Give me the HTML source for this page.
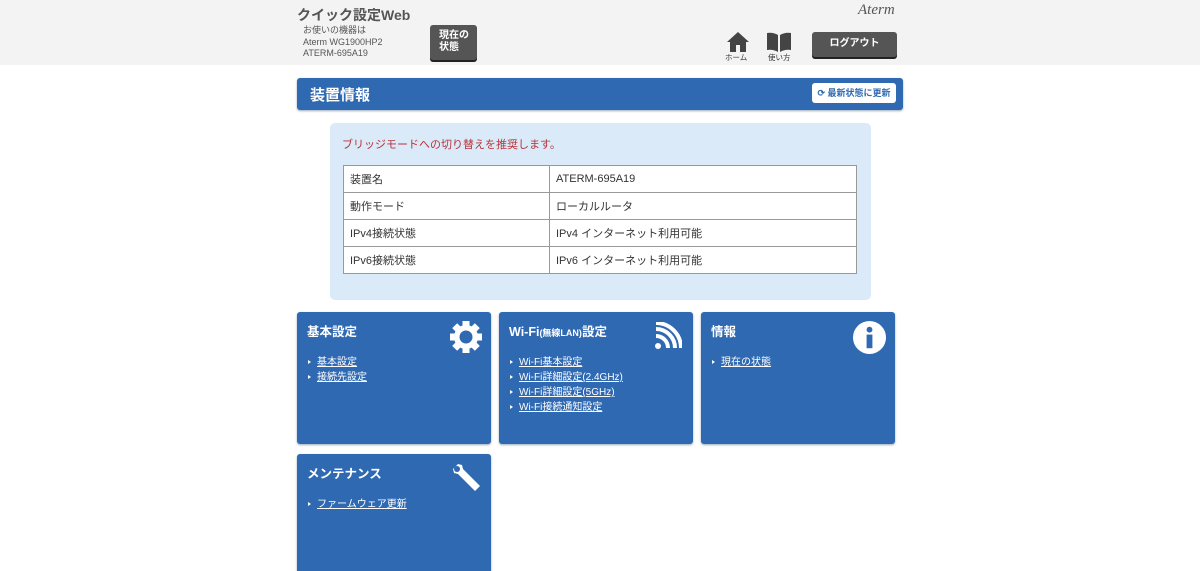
<!DOCTYPE html>
<html><head><meta charset="utf-8"><style>
*{margin:0;padding:0;box-sizing:border-box}
html,body{width:1200px;height:571px;overflow:hidden}
body{background:#fff;font-family:"Liberation Sans","Noto Sans CJK JP",sans-serif;position:relative}
.hdr{position:absolute;left:0;top:0;width:1200px;height:65px;background:#f3f3f3}
.abs{position:absolute}
.title{left:297px;top:5px;font-size:14px;font-weight:bold;color:#555}
.dev{left:303px;top:25px;font-size:9px;color:#555;line-height:11.5px}
.btn{background:#555;color:#fff;border-radius:3px;box-shadow:0 2px 0 #222;font-size:10px;font-weight:bold}
.bar{left:297px;top:78px;width:606px;height:32px;background:#2f69b2;border-radius:3px;box-shadow:0 1px 2px #9ab}
.bar h1{position:absolute;left:13px;top:6px;color:#fff;font-size:15px}
.upd{position:absolute;right:7px;top:5px;width:84px;height:20px;background:#fff;border-radius:3px;font-size:9px;color:#2f69b2;font-weight:bold;line-height:20px;text-align:center}
.info{left:330px;top:123px;width:541px;height:177px;background:#dbeaf8;border-radius:5px}
.info p{position:absolute;left:12px;top:13px;font-size:11px;color:#b8333b}
table{position:absolute;left:13px;top:42px;width:514px;border-collapse:collapse;background:#fff;font-size:11px;color:#333}
td{border:1px solid #999;height:27px;padding-left:6px}
.tile{position:absolute;width:194px;height:132px;background:#2f69b2;border-radius:3px;box-shadow:0 1px 2px #9ab;color:#fff}
.tile h2{position:absolute;left:10px;top:9px;font-size:12.5px}
.tile ul{position:absolute;left:11px;top:43px;list-style:none;font-size:10px;line-height:15px}
.tile li{padding-left:9px;position:relative}
.tile li:before{content:"";position:absolute;left:0;top:5px;border-left:3px solid #fff;border-top:2.5px solid transparent;border-bottom:2.5px solid transparent}
.tile li span{text-decoration:underline}
.tile svg{position:absolute}
</style></head><body>
<div class="hdr"></div>
<div class="abs title">クイック設定Web</div>
<div class="abs dev">お使いの機器は<br>Aterm WG1900HP2<br>ATERM-695A19</div>
<div class="abs btn" style="left:430px;top:25px;width:47px;height:35px;padding:5px 0 0 9px;line-height:12px">現在の<br>状態</div>
<div class="abs" style="left:858px;top:2px;font-family:'Liberation Serif',serif;font-style:italic;font-size:15px;color:#555">Aterm</div>
<svg class="abs" style="left:726px;top:31px" width="24" height="22" viewBox="0 0 24 22"><path d="M12 1L1 11h3v10h16V11h3z" fill="#444"/><rect x="10" y="14" width="4" height="7" fill="#f3f3f3"/></svg>
<div class="abs" style="left:725px;top:52px;font-size:7.5px;color:#333">ホーム</div>
<svg class="abs" style="left:766px;top:32px" width="26" height="20" viewBox="0 0 26 20"><path d="M1 1q6-1 11 2v17q-5-3-11-2z M14 3q5-3 11-2v17q-6-1-11 2z" fill="#444"/></svg>
<div class="abs" style="left:768px;top:52px;font-size:7.5px;color:#333">使い方</div>
<div class="abs btn" style="left:812px;top:32px;width:85px;height:25px;text-align:center;line-height:24px">ログアウト</div>
<div class="abs bar"><h1>装置情報</h1><div class="upd">⟳ 最新状態に更新</div></div>
<div class="abs info"><p>ブリッジモードへの切り替えを推奨します。</p>
<table><tr><td style="width:206px">装置名</td><td>ATERM-695A19</td></tr><tr><td>動作モード</td><td>ローカルルータ</td></tr><tr><td>IPv4接続状態</td><td>IPv4 インターネット利用可能</td></tr><tr><td>IPv6接続状態</td><td>IPv6 インターネット利用可能</td></tr></table></div>
<div class="tile" style="left:297px;top:312px"><h2>基本設定</h2>
<svg style="left:152px;top:8px" width="34" height="34" viewBox="-17 -17 34 34"><g fill="#fff"><circle r="12"/><g id="t"><rect x="-3.5" y="-16" width="7" height="7"/></g><use href="#t" transform="rotate(45)"/><use href="#t" transform="rotate(90)"/><use href="#t" transform="rotate(135)"/><use href="#t" transform="rotate(180)"/><use href="#t" transform="rotate(225)"/><use href="#t" transform="rotate(270)"/><use href="#t" transform="rotate(315)"/></g><circle r="6.5" fill="#2f69b2"/></svg>
<ul><li><span>基本設定</span></li><li><span>接続先設定</span></li></ul></div>
<div class="tile" style="left:499px;top:312px"><h2>Wi-Fi<small style="font-size:9px">(無線LAN)</small>設定</h2>
<svg style="left:155px;top:10px" width="28" height="28" viewBox="0 0 28 28"><g fill="none" stroke="#fff" stroke-width="4"><path d="M2 14a12 12 0 0 1 12 12"/><path d="M2 7a19 19 0 0 1 19 19"/><path d="M2 1a25 25 0 0 1 25 25"/></g><circle cx="4" cy="24" r="3" fill="#fff"/></svg>
<ul><li><span>Wi-Fi基本設定</span></li><li><span>Wi-Fi詳細設定(2.4GHz)</span></li><li><span>Wi-Fi詳細設定(5GHz)</span></li><li><span>Wi-Fi接続通知設定</span></li></ul></div>
<div class="tile" style="left:701px;top:312px"><h2>情報</h2>
<svg style="left:151px;top:8px" width="35" height="35" viewBox="0 0 36 36"><circle cx="18" cy="18" r="17" fill="#fff"/><circle cx="18" cy="10" r="3" fill="#2f69b2"/><rect x="15" y="15" width="6" height="14" fill="#2f69b2"/></svg>
<ul><li><span>現在の状態</span></li></ul></div>
<div class="tile" style="left:297px;top:454px;height:130px"><h2>メンテナンス</h2>
<svg style="left:152px;top:7px" width="34" height="34" viewBox="0 0 34 34"><path d="M4 8l5-5 4 1 1 4 17 17-5 5L9 13l-4-1z" fill="#fff"/><circle cx="8" cy="8" r="3" fill="#2f69b2"/></svg>
<ul><li><span>ファームウェア更新</span></li></ul></div>
</body></html>
